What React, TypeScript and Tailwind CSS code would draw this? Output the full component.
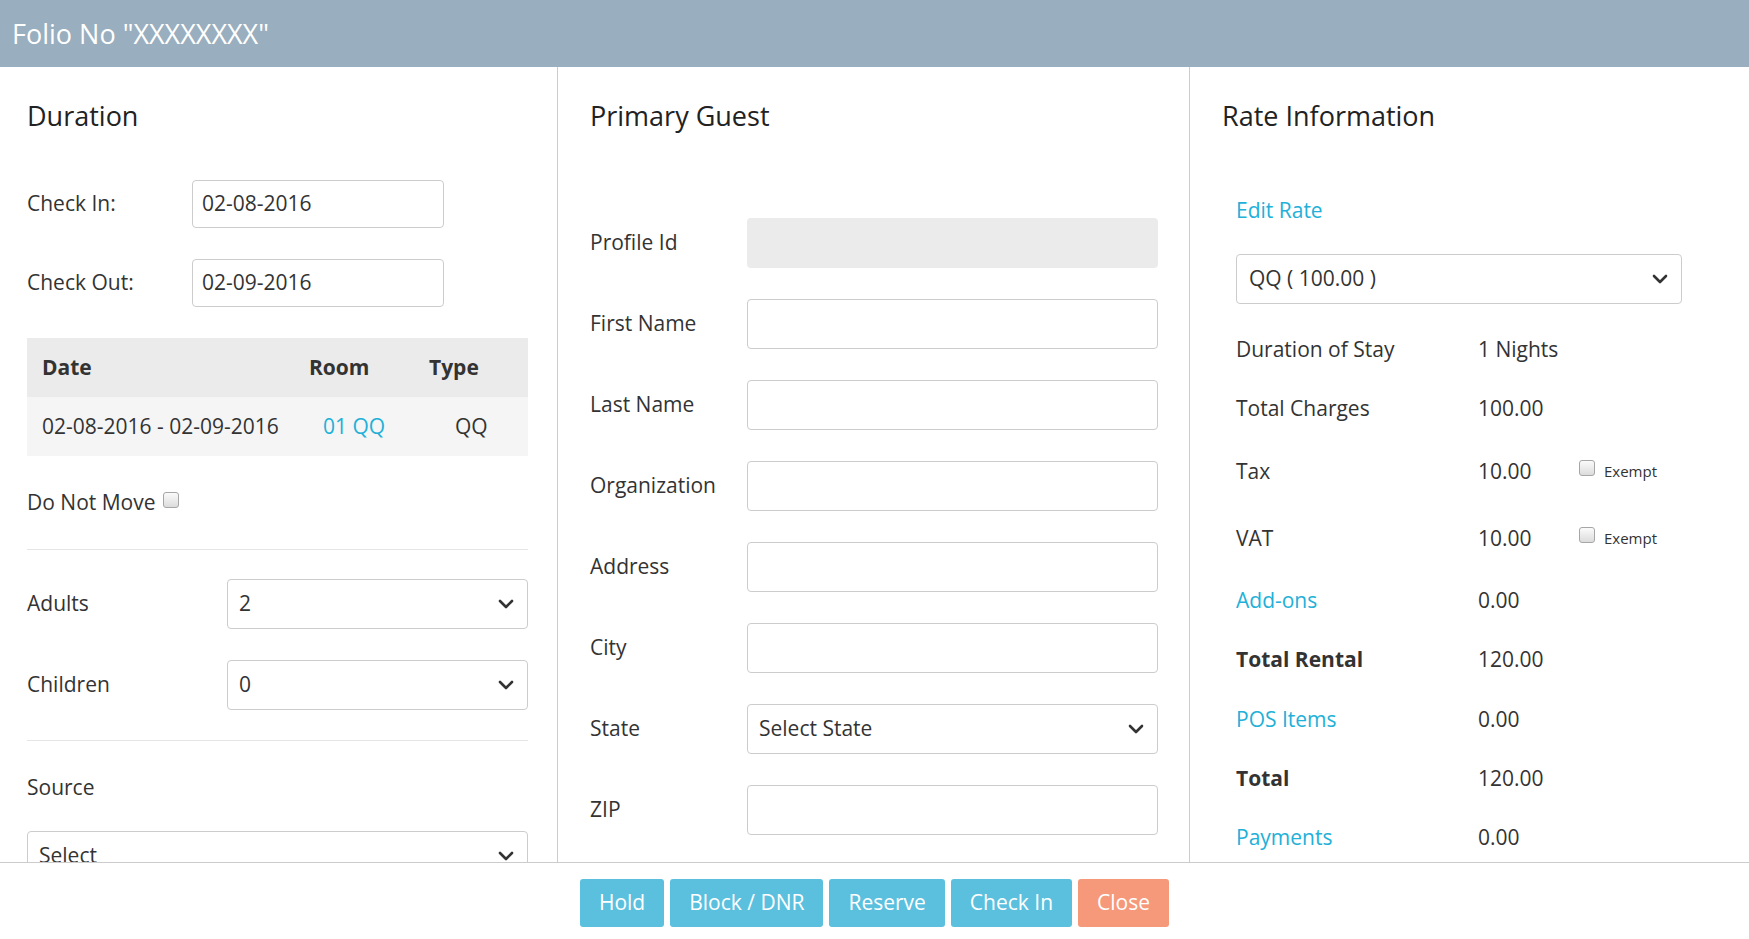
const rooms = [{ date: "02-08-2016 - 02-09-2016", room: "01 QQ", type: "QQ" }];

const guestFields = ["First Name", "Last Name", "Organization", "Address", "City"];

const rateRows = [
  { label: "Duration of Stay", value: "1 Nights", h: "h-[59px]" },
  { label: "Total Charges", value: "100.00", h: "h-[59px]" },
  { label: "Tax", value: "10.00", h: "h-[67px]", exempt: true },
  { label: "VAT", value: "10.00", h: "h-[67px]", exempt: true },
  { label: "Add-ons", value: "0.00", h: "h-[57px]", link: true },
  { label: "Total Rental", value: "120.00", h: "h-[61px]", bold: true },
  { label: "POS Items", value: "0.00", h: "h-[59px]", link: true },
  { label: "Total", value: "120.00", h: "h-[59px]", bold: true },
  { label: "Payments", value: "0.00", h: "h-[59px]", link: true },
];

function Chevron() {
  return (
    <svg width="16" height="10" viewBox="0 0 16 10" fill="none" className="shrink-0">
      <path d="M2 2l6 6 6-6" stroke="#333" strokeWidth="2.6" strokeLinecap="round" strokeLinejoin="round" />
    </svg>
  );
}

function Checkbox() {
  return (
    <span className="inline-block h-[16px] w-[16px] shrink-0 rounded-[3px] border border-[#a6a6a6] bg-linear-to-b from-[#fbfbfb] to-[#dcdcdc]" />
  );
}

function Select({ value, className = "" }: { value: string; className?: string }) {
  return (
    <div className={`flex h-[50px] items-center justify-between rounded-[4px] border border-[#cccccc] bg-white pl-[11px] pr-[13px] ${className}`}>
      <span>{value}</span>
      <Chevron />
    </div>
  );
}

function TextInput({ value = "", className = "" }: { value?: string; className?: string }) {
  return (
    <div className={`flex items-center rounded-[4px] border border-[#cccccc] bg-white pl-[9px] ${className}`}>
      {value}
    </div>
  );
}

export default function App() {
  return (
    <div className="h-[939px] w-[1749px] overflow-hidden bg-white font-['Open_Sans',sans-serif] text-[21px] text-[#333333]">
      <header className="flex h-[67px] items-center bg-[#99aebe] pl-[12px]">
        <h1 className="text-[27px] leading-none text-white">Folio No "XXXXXXXX"</h1>
      </header>

      <div className="flex h-[796px] overflow-hidden border-b border-[#cccccc]">
        {/* Duration */}
        <section className="w-[558px] shrink-0 border-r border-[#cccccc] pl-[27px] pr-[29px] pt-[33px]">
          <h2 className="text-[27px] leading-[32px] text-[#222]">Duration</h2>
          <div className="mt-[48px] flex items-center">
            <span className="w-[165px]">Check In:</span>
            <TextInput value="02-08-2016" className="h-[48px] w-[252px]" />
          </div>
          <div className="mt-[31px] flex items-center">
            <span className="w-[165px]">Check Out:</span>
            <TextInput value="02-09-2016" className="h-[48px] w-[252px]" />
          </div>
          <table className="mt-[31px] w-full border-collapse text-left">
            <thead>
              <tr className="h-[59px] bg-[#ebebeb] font-bold">
                <th className="w-[267px] pl-[15px]">Date</th>
                <th className="w-[120px] pl-[15px]">Room</th>
                <th className="pl-[15px]">Type</th>
              </tr>
            </thead>
            <tbody>
              {rooms.map((r) => (
                <tr key={r.date} className="h-[59px] bg-[#f5f5f5]">
                  <td className="pl-[15px]">{r.date}</td>
                  <td className="pl-[29px] text-[#22b0d8]">{r.room}</td>
                  <td className="pl-[41px]">{r.type}</td>
                </tr>
              ))}
            </tbody>
          </table>
          <div className="mt-[33px] flex h-[28px] items-center">
            <span>Do Not Move</span>
            <span className="mb-[6px] ml-[7px] flex">
              <Checkbox />
            </span>
          </div>
          <div className="mt-[32px] border-t border-[#e5e5e5]" />
          <div className="mt-[29px] flex items-center">
            <span className="w-[200px] shrink-0">Adults</span>
            <Select value="2" className="flex-1" />
          </div>
          <div className="mt-[31px] flex items-center">
            <span className="w-[200px] shrink-0">Children</span>
            <Select value="0" className="flex-1" />
          </div>
          <div className="mt-[30px] border-t border-[#e5e5e5]" />
          <p className="mt-[32px] h-[28px] leading-[28px]">Source</p>
          <Select value="Select" className="mt-[30px]" />
        </section>

        {/* Primary Guest */}
        <section className="w-[632px] shrink-0 border-r border-[#cccccc] pl-[32px] pr-[31px] pt-[33px]">
          <h2 className="text-[27px] leading-[32px] text-[#222]">Primary Guest</h2>
          <div className="mt-[86px] flex flex-col gap-[31px]">
            <div className="flex items-center">
              <span className="w-[157px] shrink-0">Profile Id</span>
              <div className="h-[50px] flex-1 rounded-[4px] bg-[#ebebeb]" />
            </div>
            {guestFields.map((f) => (
              <div key={f} className="flex items-center">
                <span className="w-[157px] shrink-0">{f}</span>
                <TextInput className="h-[50px] flex-1" />
              </div>
            ))}
            <div className="flex items-center">
              <span className="w-[157px] shrink-0">State</span>
              <Select value="Select State" className="flex-1" />
            </div>
            <div className="flex items-center">
              <span className="w-[157px] shrink-0">ZIP</span>
              <TextInput className="h-[50px] flex-1" />
            </div>
          </div>
        </section>

        {/* Rate Information */}
        <section className="flex-1 pl-[32px] pt-[33px]">
          <h2 className="text-[27px] leading-[32px] text-[#222]">Rate Information</h2>
          <div className="pl-[14px]">
            <a className="mt-[64px] block h-[28px] leading-[28px] text-[#22b0d8]">Edit Rate</a>
            <Select value="QQ ( 100.00 )" className="mt-[30px] w-[446px] pl-[12px]" />
            <div className="mt-[16px]">
              {rateRows.map((row) => (
                <div key={row.label} className={`flex items-center ${row.h}`}>
                  <span
                    className={`w-[242px] shrink-0 ${row.link ? "text-[#22b0d8]" : ""} ${row.bold ? "font-bold" : ""}`}
                  >
                    {row.label}
                  </span>
                  <span className="w-[101px] shrink-0">{row.value}</span>
                  {row.exempt && (
                    <span className="flex items-center">
                      <span className="mb-[8px] flex">
                        <Checkbox />
                      </span>
                      <span className="ml-[9px] text-[15px]">Exempt</span>
                    </span>
                  )}
                </div>
              ))}
            </div>
          </div>
        </section>
      </div>

      <footer className="flex justify-center gap-[6px] pt-[16px]">
        {["Hold", "Block / DNR", "Reserve", "Check In"].map((b) => (
          <button key={b} className="h-[48px] rounded-[3px] bg-[#5bc0de] px-[19px] text-white">
            {b}
          </button>
        ))}
        <button className="h-[48px] rounded-[3px] bg-[#f5997a] px-[19px] text-white">Close</button>
      </footer>
    </div>
  );
}
